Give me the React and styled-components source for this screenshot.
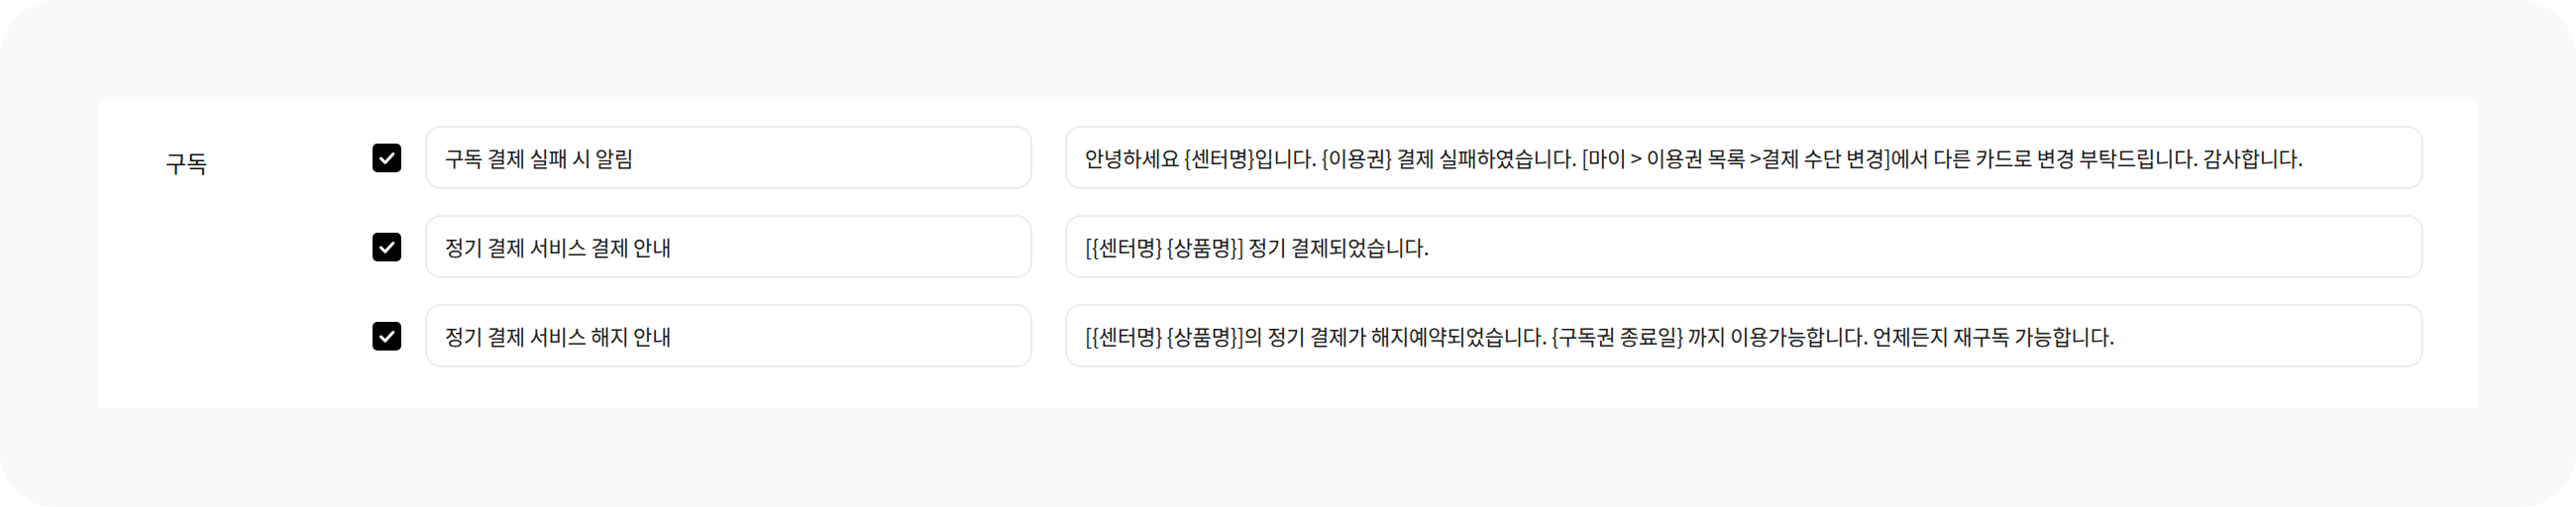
import React from 'react'
import styled, { createGlobalStyle } from 'styled-components'

const rows = [
  {
    title: '구독 결제 실패 시 알림',
    message:
      '안녕하세요 {센터명}입니다. {이용권} 결제 실패하였습니다. [마이 > 이용권 목록 >결제 수단 변경]에서 다른 카드로 변경 부탁드립니다. 감사합니다.',
  },
  {
    title: '정기 결제 서비스 결제 안내',
    message: '[{센터명} {상품명}] 정기 결제되었습니다.',
  },
  {
    title: '정기 결제 서비스 해지 안내',
    message:
      '[{센터명} {상품명}]의 정기 결제가 해지예약되었습니다. {구독권 종료일} 까지 이용가능합니다. 언제든지 재구독 가능합니다.',
  },
]

const App = () => {
  return (
    <>
      <GlobalStyle />
      <Page>
        <Panel>
          <Label>구독</Label>
          <List>
            {rows.map((row) => (
              <Row key={row.title}>
                <CheckBox>
                  <svg width="29" height="29" viewBox="0 0 29 29">
                    <path
                      d="M8.5 15 L12.8 19.2 L20.8 10.5"
                      fill="none"
                      stroke="#fff"
                      strokeWidth="3"
                      strokeLinecap="round"
                      strokeLinejoin="round"
                    />
                  </svg>
                </CheckBox>
                <Field width="613px">{row.title}</Field>
                <Field grow>{row.message}</Field>
              </Row>
            ))}
          </List>
        </Panel>
      </Page>
    </>
  )
}

export default App

const GlobalStyle = createGlobalStyle`
  body {
    margin: 0;
    background: #ffffff;
    font-family: "Noto Sans CJK KR", "Noto Sans", sans-serif;
  }
`

const Page = styled.div`
  width: 2600px;
  height: 512px;
  box-sizing: border-box;
  padding: 100px 100px 0;
  background: #f8f9fb;
  border-radius: 56px;
`

const Panel = styled.div`
  display: flex;
  align-items: flex-start;
  box-sizing: border-box;
  height: 312px;
  padding: 27px 54px 0 67px;
  background: #ffffff;
`

const Label = styled.div`
  width: 209px;
  flex-shrink: 0;
  margin-top: 20px;
  font-size: 23px;
  font-weight: 400;
  line-height: 34px;
  color: #111;
`

const List = styled.div`
  flex: 1;
  display: flex;
  flex-direction: column;
  gap: 26px;
`

const Row = styled.div`
  display: flex;
  align-items: center;
  gap: 24px;
`

const CheckBox = styled.div`
  width: 29px;
  height: 29px;
  flex-shrink: 0;
  border-radius: 5px;
  background: #000;
  display: flex;
`

const Field = styled.div`
  box-sizing: border-box;
  height: 64px;
  width: ${(p) => p.width || 'auto'};
  flex: ${(p) => (p.grow ? 1 : '0 0 auto')};
  margin-left: ${(p) => (p.grow ? '9px' : '0')};
  display: flex;
  align-items: center;
  padding: 0 18px;
  border: 2px solid #ececee;
  border-radius: 16px;
  font-size: 21px;
  letter-spacing: -0.2px;
  color: #1b1b1b;
  white-space: nowrap;
  overflow: hidden;
`
